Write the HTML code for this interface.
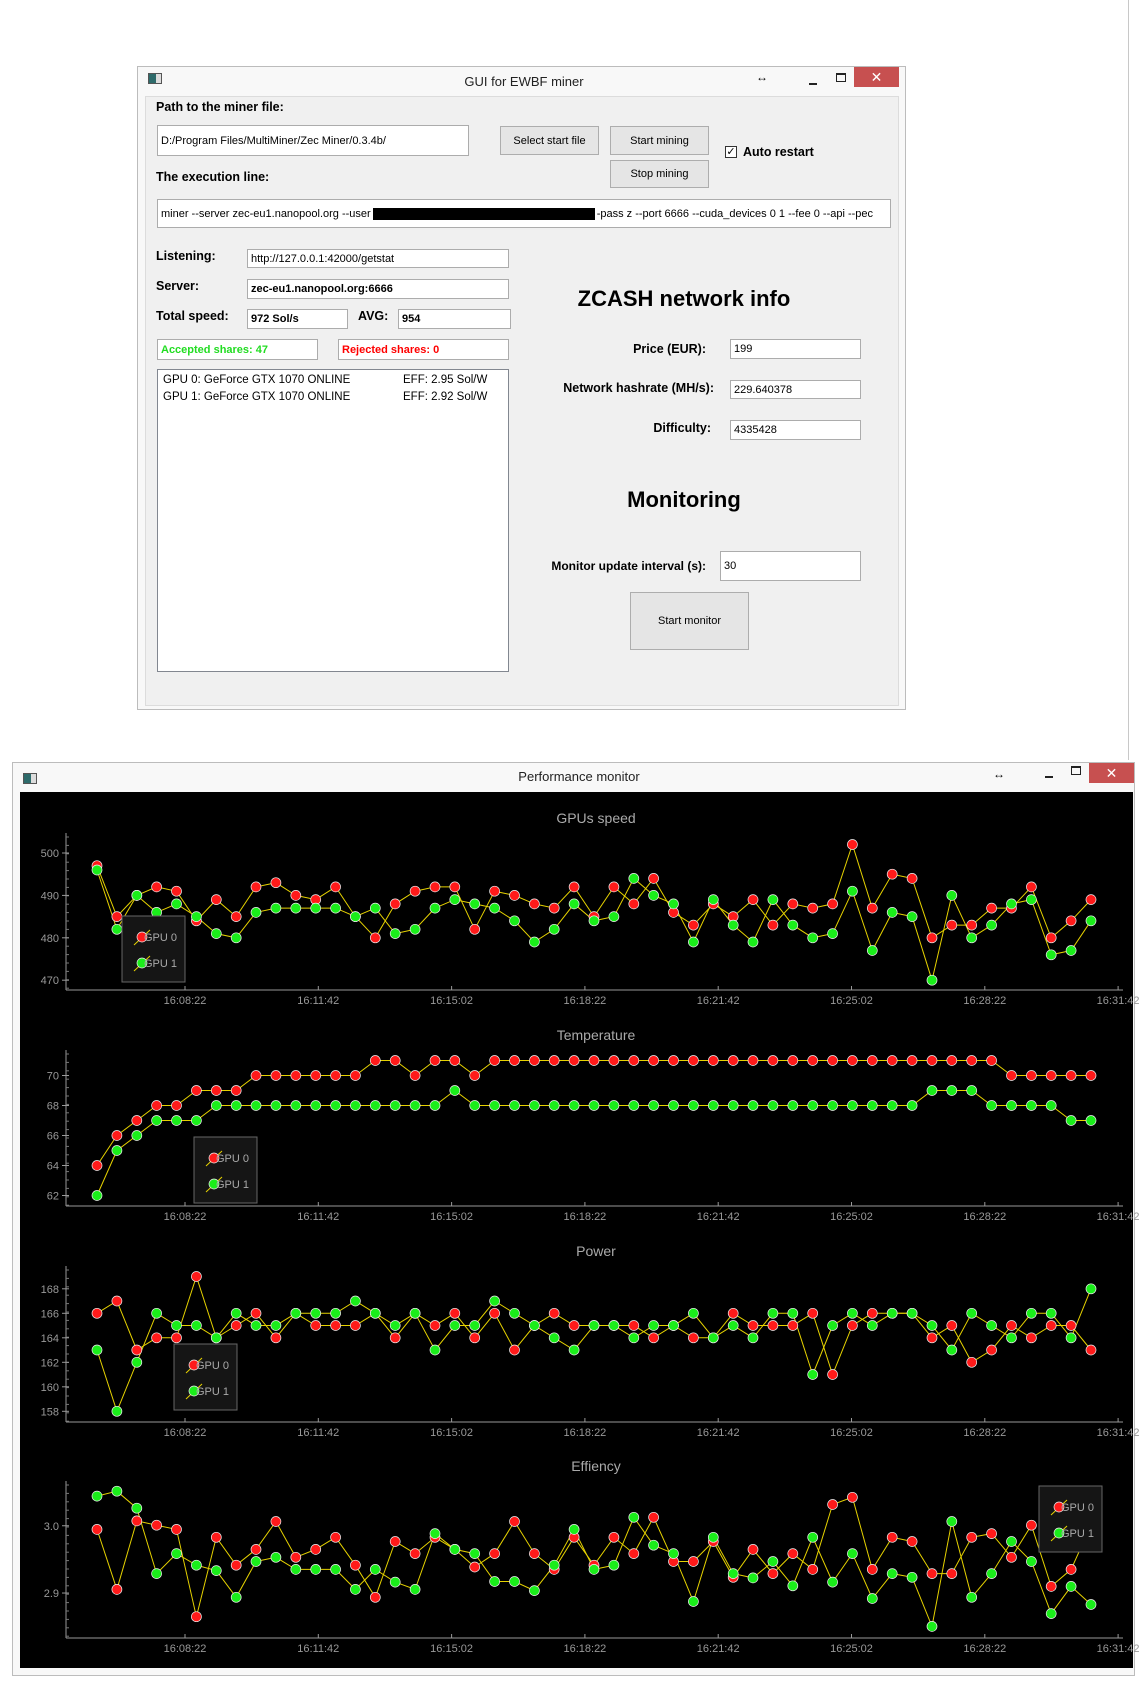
<!DOCTYPE html>
<html><head><meta charset="utf-8">
<style>
*{box-sizing:border-box;margin:0;padding:0}
body{width:1140px;height:1700px;background:#fff;position:relative;overflow:hidden;font-family:"Liberation Sans",sans-serif;font-size:12px;color:#000}
.a{position:absolute}
.inp{position:absolute;background:#fff;border:1px solid #acacac;font-size:11px;padding-left:3px;display:flex;align-items:center;white-space:nowrap;overflow:hidden}
.btn{position:absolute;background:#e5e5e5;border:1px solid #adadad;font-size:11px;display:flex;align-items:center;justify-content:center}
.b{font-weight:bold;font-size:13px}
.lbl{position:absolute;font-weight:bold;font-size:12.5px;white-space:nowrap}
.r{text-align:right}
.close{position:absolute;background:#c75050;color:#fff;font-size:14px;display:flex;align-items:center;justify-content:center}
</style></head><body>
<div class="a" style="left:1128px;top:0;width:1px;height:760px;background:#c8c8c8"></div>
<!-- top window -->
<div class="a" style="left:137px;top:66px;width:769px;height:644px;background:#f8f8f8;border:1px solid #bcbcbc"></div>
<div class="a" style="left:148px;top:73px;width:14px;height:11px;border:1px solid #555;background:linear-gradient(90deg,#2e6b6b 60%,#ddd 60%)"></div>
<div class="a" style="left:424px;top:74px;width:200px;text-align:center;font-size:13px;color:#222">GUI for EWBF miner</div>
<div class="a" style="left:756px;top:70px;font-size:12px;font-weight:bold">↔</div>
<div class="a" style="left:809px;top:83px;width:8px;height:2px;background:#222"></div>
<div class="a" style="left:836px;top:73px;width:10px;height:9px;border:1px solid #222;border-top-width:2px"></div>
<div class="close" style="left:854px;top:67px;width:45px;height:20px">✕</div>
<div class="a" style="left:145px;top:96px;width:754px;height:610px;background:#f0f0f0;border:1px solid #dcdcdc"></div>

<div class="lbl" style="left:156px;top:100px">Path to the miner file:</div>
<div class="inp" style="left:157px;top:125px;width:312px;height:31px">D:/Program Files/MultiMiner/Zec Miner/0.3.4b/</div>
<div class="btn" style="left:500px;top:126px;width:99px;height:29px">Select start file</div>
<div class="btn" style="left:610px;top:126px;width:99px;height:29px">Start mining</div>
<div class="btn" style="left:610px;top:160px;width:99px;height:28px">Stop mining</div>
<div class="a" style="left:725px;top:146px;width:12px;height:12px;border:1px solid #333;background:#fff;font-size:11px;line-height:10px;text-align:center">✓</div>
<div class="lbl" style="left:743px;top:145px">Auto restart</div>
<div class="lbl" style="left:156px;top:170px">The execution line:</div>
<div class="inp" style="left:157px;top:199px;width:734px;height:29px">miner --server zec-eu1.nanopool.org --user<span style="display:inline-block;width:222px;height:12px;background:#000;margin:0 2px"></span>-pass z --port 6666 --cuda_devices 0 1 --fee 0 --api --pec</div>

<div class="lbl" style="left:156px;top:249px">Listening:</div>
<div class="inp" style="left:247px;top:249px;width:262px;height:19px">http://127.0.0.1:42000/getstat</div>
<div class="lbl" style="left:156px;top:279px">Server:</div>
<div class="inp" style="left:247px;top:279px;width:262px;height:20px;font-weight:bold">zec-eu1.nanopool.org:6666</div>
<div class="lbl" style="left:156px;top:309px">Total speed:</div>
<div class="inp" style="left:247px;top:309px;width:101px;height:20px;font-weight:bold">972 Sol/s</div>
<div class="lbl" style="left:358px;top:309px">AVG:</div>
<div class="inp" style="left:398px;top:309px;width:113px;height:20px;font-weight:bold">954</div>
<div class="inp" style="left:157px;top:339px;width:161px;height:21px;font-weight:bold;color:#22dd22">Accepted shares: 47</div>
<div class="inp" style="left:338px;top:339px;width:171px;height:21px;font-weight:bold;color:#f00">Rejected shares: 0</div>
<div class="a" style="left:157px;top:369px;width:352px;height:303px;background:#fff;border:1px solid #828790;font-size:11.5px">
<div class="a" style="left:5px;top:4px">GPU 0: GeForce GTX 1070 ONLINE</div><div class="a" style="left:245px;top:4px">EFF: 2.95 Sol/W</div>
<div class="a" style="left:5px;top:21px">GPU 1: GeForce GTX 1070 ONLINE</div><div class="a" style="left:245px;top:21px">EFF: 2.92 Sol/W</div>
</div>

<div class="a" style="left:534px;top:286px;width:300px;text-align:center;font-weight:bold;font-size:22px">ZCASH network info</div>
<div class="lbl r" style="left:506px;top:342px;width:200px">Price (EUR):</div>
<div class="inp" style="left:730px;top:339px;width:131px;height:20px">199</div>
<div class="lbl r" style="left:506px;top:381px;width:208px">Network hashrate (MH/s):</div>
<div class="inp" style="left:730px;top:380px;width:131px;height:19px">229.640378</div>
<div class="lbl r" style="left:506px;top:421px;width:205px">Difficulty:</div>
<div class="inp" style="left:730px;top:420px;width:131px;height:20px">4335428</div>
<div class="a" style="left:534px;top:487px;width:300px;text-align:center;font-weight:bold;font-size:22px">Monitoring</div>
<div class="lbl r" style="left:456px;top:559px;width:250px;font-size:12px">Monitor update interval (s):</div>
<div class="inp" style="left:720px;top:551px;width:141px;height:30px">30</div>
<div class="btn" style="left:630px;top:592px;width:119px;height:58px">Start monitor</div>

<!-- bottom window -->
<div class="a" style="left:12px;top:762px;width:1123px;height:914px;background:#f8f8f8;border:1px solid #bcbcbc"></div>
<div class="a" style="left:23px;top:773px;width:14px;height:11px;border:1px solid #555;background:linear-gradient(90deg,#2e6b6b 60%,#ddd 60%)"></div>
<div class="a" style="left:479px;top:769px;width:200px;text-align:center;font-size:13px;color:#222">Performance monitor</div>
<div class="a" style="left:993px;top:767px;font-size:12px;font-weight:bold">↔</div>
<div class="a" style="left:1045px;top:776px;width:8px;height:2px;background:#222"></div>
<div class="a" style="left:1071px;top:766px;width:10px;height:9px;border:1px solid #222;border-top-width:2px"></div>
<div class="close" style="left:1089px;top:763px;width:45px;height:20px">✕</div>
<div class="a" style="left:20px;top:792px;width:1113px;height:876px;background:#000"></div>
<svg id="s" class="a" style="left:0;top:0" width="1140" height="1700" font-family="Liberation Sans, sans-serif"></svg>
<script>
var S=document.getElementById('s'),h='';
var times=['16:08:22','16:11:42','16:15:02','16:18:22','16:21:42','16:25:02','16:28:22','16:31:42'];
function X(i){return 97+19.88*i}
function chart(title,ty,axTop,axY,ticks,r,g,legend){
 h+='<text x="596" y="'+(ty+5)+'" fill="#aaa" font-size="14" text-anchor="middle">'+title+'</text>';
 h+='<line x1="66" y1="'+axTop+'" x2="66" y2="'+axY+'" stroke="#999"/>';
 h+='<line x1="66" y1="'+axY+'" x2="1123" y2="'+axY+'" stroke="#999"/>';
 for(var y=axTop+4;y<axY;y+=8.4)h+='<line x1="66" y1="'+y+'" x2="69" y2="'+y+'" stroke="#777"/>';
 ticks.forEach(function(t){h+='<line x1="62" y1="'+t[1]+'" x2="69" y2="'+t[1]+'" stroke="#999"/><text x="59" y="'+(t[1]+4)+'" fill="#999" font-size="11" text-anchor="end">'+t[0]+'</text>'});
 times.forEach(function(t,k){var x=185+133.3*k;h+='<line x1="'+x+'" y1="'+(axY-4)+'" x2="'+x+'" y2="'+axY+'" stroke="#999"/><text x="'+x+'" y="'+(axY+14)+'" fill="#999" font-size="11" text-anchor="middle">'+t+'</text>'});
 [r,g].forEach(function(d){var p=d.map(function(v,i){return X(i).toFixed(1)+','+v.toFixed(1)}).join(' ');h+='<polyline points="'+p+'" fill="none" stroke="#e6d200" stroke-width="1"/>'});
 [[r,'#ff1a1a'],[g,'#1aee1a']].forEach(function(a){a[0].forEach(function(v,i){h+='<circle cx="'+X(i).toFixed(1)+'" cy="'+v.toFixed(1)+'" r="5" fill="'+a[1]+'" stroke="#eee" stroke-width="0.7"/>'})});
 var lx=legend[0],ly=legend[1];
 h+='<rect x="'+lx+'" y="'+ly+'" width="63" height="66" fill="#151515" stroke="#666"/>';
 [['GPU 0','#ff1a1a',21],['GPU 1','#1aee1a',47]].forEach(function(l){var cy=ly+l[2];h+='<line x1="'+(lx+12)+'" y1="'+(cy+8)+'" x2="'+(lx+28)+'" y2="'+(cy-7)+'" stroke="#e6d200"/><circle cx="'+(lx+20)+'" cy="'+cy+'" r="5" fill="'+l[1]+'" stroke="#eee" stroke-width="0.7"/><text x="'+(lx+22)+'" y="'+(cy+4)+'" fill="#aaa" font-size="11">'+l[0]+'</text>'});
}
var sR=[497,485,490,492,491,484,489,485,492,493,490,489,492,485,480,488,491,492,492,482,491,490,488,487,492,485,492,488,494,486,483,488,485,489,483,488,487,488,502,487,495,494,480,483,483,487,487,492,480,484,489];
var sG=[496,482,490,486,488,485,481,480,486,487,487,487,487,485,487,481,482,487,489,488,487,484,479,482,488,484,485,494,490,488,479,489,483,479,489,483,480,481,491,477,486,485,470,490,480,483,488,489,476,477,484];
function m1(v){return 853+(500-v)*4.24}
chart('GPUs speed',818,833,990,[[500,853],[490,895.4],[480,937.8],[470,980.2]],sR.map(m1),sG.map(m1),[122,916]);
var tR=[64,66,67,68,68,69,69,69,70,70,70,70,70,70,71,71,70,71,71,70],tG=[62,65,66,67,67,67,68,68,68,68,68,68,68,68,68,68,68,68,69,68];
for(var i=20;i<=50;i++){tR.push(i<=45?71:70);tG.push(i<=41?68:(i<=44?69:(i<=48?68:67)))}
function m2(v){return 1075.5+(70-v)*15}
chart('Temperature',1035,1050,1206,[[70,1075.5],[68,1105.5],[66,1135.5],[64,1165.5],[62,1195.5]],tR.map(m2),tG.map(m2),[194,1137]);
var pR=[166,167,163,164,164,169,164,165,166,164,166,165,165,165,166,164,166,165,166,164,166,163,165,166,165,165,165,165,164,165,164,164,166,165,165,165,166,161,165,166,166,166,164,165,162,163,165,164,165,165,163];
var pG=[163,158,162,166,165,165,164,166,165,165,166,166,166,167,166,165,166,163,165,165,167,166,165,164,163,165,165,164,165,165,166,164,165,164,166,166,161,165,166,165,166,166,165,163,166,165,164,166,166,164,168];
function m3(v){return 1288.8+(168-v)*12.25}
chart('Power',1251,1266,1422,[[168,1288.8],[166,1301.1],[164,1313.3],[162,1325.6],[160,1337.8],[158,1350]].map(function(t){return [t[0],m3(t[0])]}),pR.map(m3),pG.map(m3),[174,1344]);
var eR=[1286,1385,1272,1279,1286,1430,1299,1345,1319,1273,1332,1319,1299,1345,1398,1306,1326,1299,1319,1348,1326,1273,1326,1352,1299,1345,1299,1326,1266,1339,1339,1306,1365,1319,1359,1326,1352,1245,1233,1352,1299,1306,1359,1359,1299,1293,1332,1279,1380,1352,1279];
var eG=[1231,1223,1251,1359,1326,1345,1354,1398,1339,1332,1352,1352,1352,1385,1352,1373,1385,1293,1319,1326,1372,1372,1387,1345,1286,1352,1345,1266,1312,1326,1405,1299,1359,1366,1339,1379,1299,1373,1326,1400,1359,1365,1446,1273,1398,1359,1306,1339,1425,1380,1410];
function m4(z){return z/1.65+750}
chart('Effiency',1466,1481,1638,[['3.0',m4(1280)],['2.9',m4(1391)]],eR.map(m4),eG.map(m4),[1039,1486]);
S.innerHTML=h;
</script>
</body></html>
